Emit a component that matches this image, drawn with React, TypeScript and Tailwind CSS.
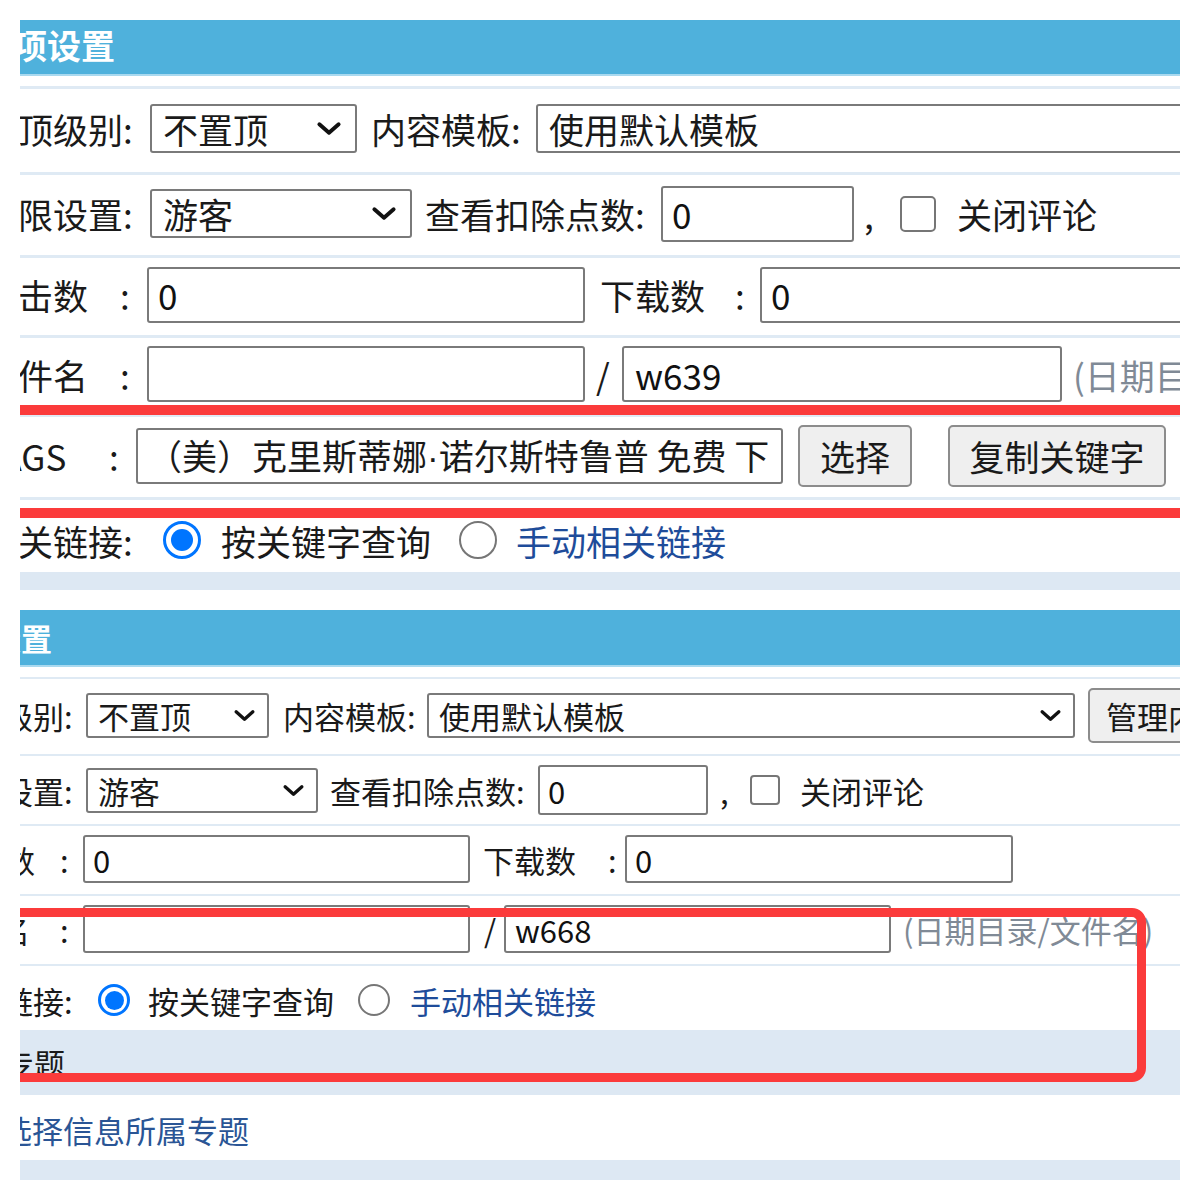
import React from "react";

function Chevron({ className }: { className: string }) {
  return (
    <svg viewBox="0 0 24 14" className={className} fill="none">
      <polyline points="3,3 12,11 21,3" stroke="#111" strokeWidth="3.6" strokeLinecap="round" strokeLinejoin="round" />
    </svg>
  );
}

function Sel({ className, text, chev }: { className: string; text: string; chev: string }) {
  return (
    <div className={`flex shrink-0 items-center justify-between rounded-[3px] border-2 border-[#7a7a7a] bg-white ${className}`}>
      <span className="whitespace-nowrap">{text}</span>
      <Chevron className={chev} />
    </div>
  );
}

function Field({ className, value = "" }: { className: string; value?: string }) {
  return (
    <input
      readOnly
      value={value}
      className={`shrink-0 rounded-[3px] border-2 border-[#7a7a7a] bg-white py-0 leading-none text-[#111] outline-none ${className}`}
    />
  );
}

function Btn({ className, children }: { className: string; children: React.ReactNode }) {
  return (
    <div className={`flex shrink-0 items-center whitespace-nowrap rounded-[5px] border-2 border-[#8c8c8c] bg-[#efefef] ${className}`}>
      {children}
    </div>
  );
}

function Radio({ on, big }: { on: boolean; big: boolean }) {
  if (on) {
    return (
      <span className={`flex shrink-0 items-center justify-center rounded-full border-[3px] border-[#0075ff] bg-white ${big ? "h-[38px] w-[38px]" : "h-[32px] w-[32px]"}`}>
        <span className={`rounded-full bg-[#0075ff] ${big ? "h-[22px] w-[22px]" : "h-[19px] w-[19px]"}`} />
      </span>
    );
  }
  return <span className={`shrink-0 rounded-full border-2 border-[#767676] bg-white ${big ? "h-[38px] w-[38px]" : "h-[32px] w-[32px]"}`} />;
}

export default function App() {
  return (
    <div className="h-[1200px] w-[1200px] bg-white p-[20px] font-['Noto_Sans_CJK_SC','Microsoft_YaHei',sans-serif] text-[#1a1a1a]">
      <div className="relative h-[1160px] w-[1160px] overflow-hidden">
        {/* 上半部分 */}
        <div className="flex flex-col text-[35px] leading-none">
          <div className="flex h-[56px] items-center border-b-2 border-[#a9d9ef] bg-[#4fb1dc] pb-[4px] text-[34px] font-bold text-white">
            <span className="ml-[-41px] whitespace-nowrap">选项设置</span>
          </div>
          <div className="h-[10px]" />

          <div className="flex h-[86px] items-center whitespace-nowrap border-t-[3px] border-[#dfeaf4] pb-[4px]">
            <span className="ml-[-2px] w-[132px] shrink-0">顶级别:</span>
            <Sel className="h-[49px] w-[207px] pl-[11px] pr-[13px]" text="不置顶" chev="h-[15px] w-[26px]" />
            <span className="ml-[14px] w-[165px] shrink-0">内容模板:</span>
            <Sel className="h-[49px] w-[720px] pl-[11px] pr-[13px]" text="使用默认模板" chev="h-[15px] w-[26px]" />
          </div>

          <div className="flex h-[83px] items-center whitespace-nowrap border-t-[3px] border-[#dfeaf4] pb-[3px]">
            <span className="ml-[-2px] w-[132px] shrink-0">限设置:</span>
            <Sel className="h-[49px] w-[262px] pl-[11px] pr-[13px]" text="游客" chev="h-[15px] w-[26px]" />
            <span className="ml-[13px] w-[236px] shrink-0">查看扣除点数:</span>
            <Field className="h-[56px] w-[193px] px-[9px] text-[35px]" value="0" />
            <span className="w-[46px] shrink-0 pl-[10px]">,</span>
            <span className="h-[36px] w-[36px] shrink-0 rounded-[5px] border-2 border-[#767676] bg-white" />
            <span className="ml-[21px]">关闭评论</span>
          </div>

          <div className="flex h-[80px] items-center whitespace-nowrap border-t-[3px] border-[#dfeaf4] pb-[4px]">
            <span className="ml-[-2px] w-[102px] shrink-0">击数</span>
            <span className="w-[27px] shrink-0">:</span>
            <Field className="h-[56px] w-[438px] px-[9px] text-[35px]" value="0" />
            <span className="ml-[15px] w-[135px] shrink-0">下载数</span>
            <span className="w-[25px] shrink-0">:</span>
            <Field className="h-[56px] w-[520px] px-[9px] text-[35px]" value="0" />
          </div>

          <div className="flex h-[79px] items-center whitespace-nowrap border-t-[3px] border-[#dfeaf4] pb-[4px]">
            <span className="ml-[-2px] w-[102px] shrink-0">件名</span>
            <span className="w-[27px] shrink-0">:</span>
            <Field className="h-[56px] w-[438px] px-[9px] text-[35px]" />
            <span className="w-[37px] shrink-0 pl-[11px]">/</span>
            <Field className="h-[56px] w-[440px] px-[11px] text-[35px]" value="w639" />
            <span className="ml-[11px] text-[#808a96]">(日期目录/文件名)</span>
          </div>

          <div className="flex h-[83px] items-center whitespace-nowrap border-t-[3px] border-[#dfeaf4] pb-[3px]">
            <span className="ml-[-39px] w-[128px] shrink-0">TAGS</span>
            <span className="w-[27px] shrink-0">:</span>
            <div className="flex h-[56px] w-[647px] shrink-0 items-center overflow-hidden rounded-[3px] border-2 border-[#7a7a7a] bg-white px-[9px]">
              <span className="whitespace-nowrap">
                （美）克里斯蒂娜<span className="font-['Liberation_Sans',sans-serif]">·</span>诺尔斯特鲁普 免费 下
              </span>
            </div>
            <Btn className="ml-[15px] h-[62px] w-[114px] justify-center">选择</Btn>
            <Btn className="ml-[36px] h-[62px] w-[218px] justify-center">复制关键字</Btn>
          </div>

          <div className="flex h-[75px] items-center whitespace-nowrap border-t-[3px] border-[#dfeaf4] pt-[8px]">
            <span className="ml-[-2px] w-[145px] shrink-0">关链接:</span>
            <Radio on big />
            <span className="ml-[20px]">按关键字查询</span>
            <span className="ml-[28px] flex">
              <Radio on={false} big />
            </span>
            <span className="ml-[19px] text-[#1e4c9a]">手动相关链接</span>
          </div>

          <div className="h-[18px] bg-[#dde8f3]" />
        </div>

        {/* 下半部分 */}
        <div className="mt-[20px] flex flex-col text-[31px] leading-none">
          <div className="flex h-[57px] items-center border-b-2 border-[#a9d9ef] bg-[#4fb1dc] text-[31px] font-bold text-white">
            <span className="ml-[-30px] whitespace-nowrap">设置</span>
          </div>
          <div className="h-[10px]" />

          <div className="flex h-[77px] items-center whitespace-nowrap border-t-2 border-[#dfeaf4] pb-[2px]">
            <span className="ml-[-49px] w-[115px] shrink-0">顶级别:</span>
            <Sel className="h-[45px] w-[183px] pl-[10px] pr-[11px]" text="不置顶" chev="h-[13px] w-[23px]" />
            <span className="ml-[14px] w-[144px] shrink-0">内容模板:</span>
            <Sel className="h-[45px] w-[648px] pl-[10px] pr-[11px]" text="使用默认模板" chev="h-[13px] w-[23px]" />
            <Btn className="ml-[13px] h-[55px] w-[220px] pl-[16px]">管理内容模板</Btn>
          </div>

          <div className="flex h-[70px] items-center whitespace-nowrap border-t-2 border-[#dfeaf4]">
            <span className="ml-[-49px] w-[115px] shrink-0">限设置:</span>
            <Sel className="h-[45px] w-[232px] pl-[10px] pr-[11px]" text="游客" chev="h-[13px] w-[23px]" />
            <span className="ml-[12px] w-[208px] shrink-0">查看扣除点数:</span>
            <Field className="h-[50px] w-[170px] px-[8px] text-[31px]" value="0" />
            <span className="w-[42px] shrink-0 pl-[12px]">,</span>
            <span className="h-[30px] w-[30px] shrink-0 rounded-[4px] border-2 border-[#767676] bg-white" />
            <span className="ml-[20px]">关闭评论</span>
          </div>

          <div className="flex h-[70px] items-center whitespace-nowrap border-t-2 border-[#dfeaf4] pb-[2px]">
            <span className="ml-[-47px] w-[87px] shrink-0">击数</span>
            <span className="w-[23px] shrink-0">:</span>
            <Field className="h-[48px] w-[387px] px-[8px] text-[31px]" value="0" />
            <span className="ml-[13px] w-[125px] shrink-0">下载数</span>
            <span className="w-[17px] shrink-0">:</span>
            <Field className="h-[48px] w-[388px] px-[8px] text-[31px]" value="0" />
          </div>

          <div className="flex h-[70px] items-center whitespace-nowrap border-t-2 border-[#dfeaf4] pb-[2px]">
            <span className="ml-[-52px] w-[92px] shrink-0">件名</span>
            <span className="w-[23px] shrink-0">:</span>
            <Field className="h-[48px] w-[387px] px-[8px] text-[31px]" />
            <span className="w-[34px] shrink-0 pl-[14px]">/</span>
            <Field className="h-[48px] w-[387px] px-[9px] text-[31px]" value="w668" />
            <span className="ml-[12px] text-[#808a96]">(日期目录/文件名)</span>
          </div>

          <div className="flex h-[66px] items-center whitespace-nowrap border-t-2 border-[#dfeaf4] pt-[4px]">
            <span className="ml-[-49px] w-[127px] shrink-0">关链接:</span>
            <Radio on big={false} />
            <span className="ml-[18px]">按关键字查询</span>
            <span className="ml-[24px] flex">
              <Radio on={false} big={false} />
            </span>
            <span className="ml-[20px] text-[#1e4c9a]">手动相关链接</span>
          </div>

          <div className="flex h-[65px] items-center whitespace-nowrap bg-[#dde8f3]">
            <span className="ml-[-17px]">专题</span>
          </div>

          <div className="flex h-[65px] items-center whitespace-nowrap pt-[4px]">
            <span className="ml-[-19px] text-[#2a5595]">选择信息所属专题</span>
          </div>

          <div className="h-[20px] bg-[#dde8f3]" />
        </div>

        {/* 红色标注 */}
        <div className="absolute left-0 right-0 top-[385px] h-[10px] bg-[#fb3b3b]" />
        <div className="absolute left-0 right-0 top-[488px] h-[10px] bg-[#fb3b3b]" />
        <div className="absolute left-[-40px] top-[888px] h-[174px] w-[1166px] rounded-[14px] border-[9px] border-[#fb3b3b]" />
      </div>
    </div>
  );
}
